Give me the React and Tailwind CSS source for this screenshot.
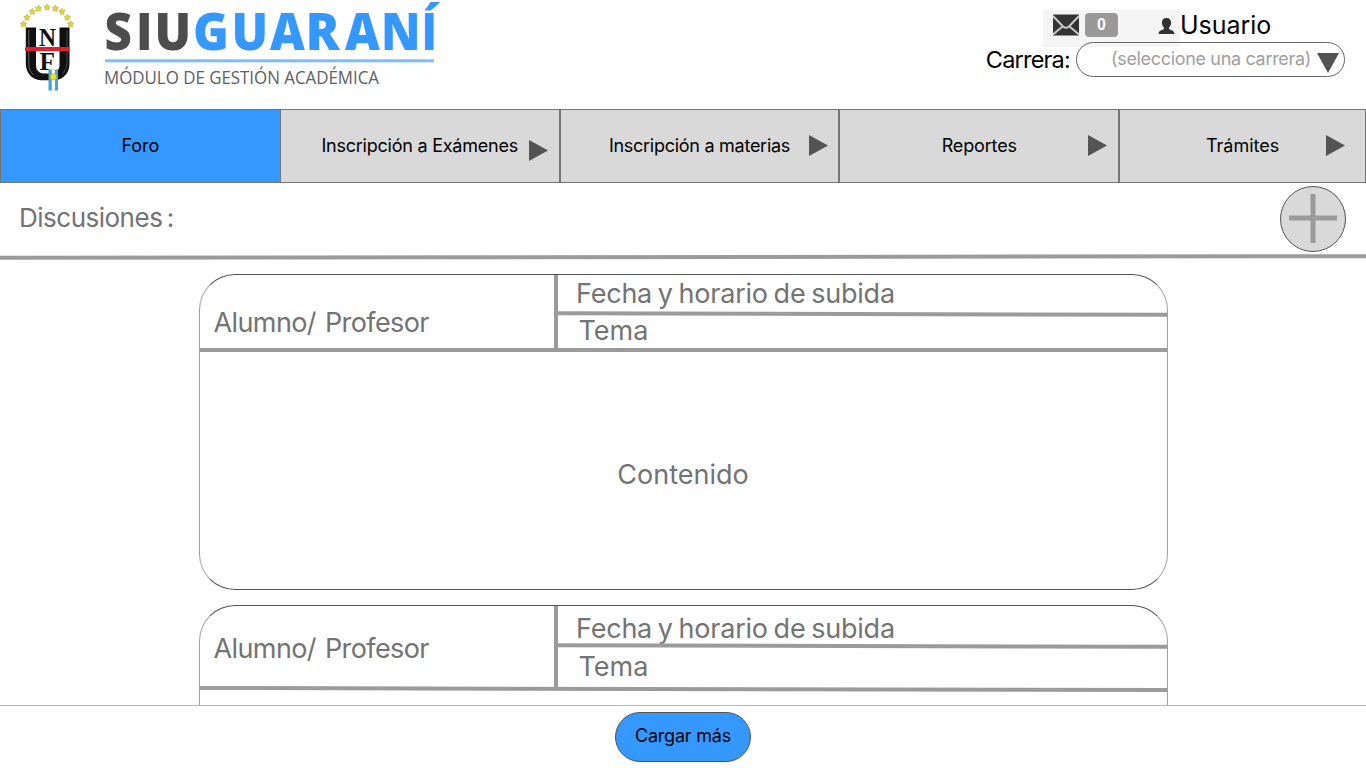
function Crest() {
  const stars = [[23.5, 24], [27, 17.3], [32.3, 11.5], [38.5, 8.3], [47, 7.2], [55.3, 8.3], [62, 11.5], [67.3, 17.3], [70.5, 24]];
  return (
    <svg width="100" height="100" viewBox="0 0 100 100" className="shrink-0">
      {stars.map(([x, y]) => (
        <path
          key={x}
          transform={`translate(${x} ${y})`}
          d="M0-3.200L1.200-1.200 3.200-.9 1.700.9 2 3 0 2.100-2 3-1.700.9-3.200-.9-1.200-1.200Z"
          fill="#e3d832"
          stroke="#a89f3c"
          strokeWidth=".5"
        />
      ))}
      <path d="M25.800 27.500h10.200v38c0 4 2.500 7 6.500 8h9.500c4.500-1 7.500-4 7.500-8v-38h10v36c0 10-6.500 16-14.500 16.800H41C32 79.500 25.800 73 25.800 63.500Z" fill="#101010" />
      <path d="M28.800 30v34c0 5 2 8.500 5 11" fill="none" stroke="#666" strokeWidth="1" />
      <path d="M67 30v32c0 5-2 9-5 12" fill="none" stroke="#555" strokeWidth=".8" />
      <text x="39" y="46" fontFamily="Liberation Serif, serif" fontWeight="bold" fontSize="26" textLength="17" lengthAdjust="spacingAndGlyphs" fill="#111">N</text>
      <text x="39.500" y="70" fontFamily="Liberation Serif, serif" fontWeight="bold" fontSize="26" textLength="15.500" lengthAdjust="spacingAndGlyphs" fill="#111">F</text>
      <rect x="25" y="47" width="44.500" height="4" rx="1" fill="#e0202c" />
      <rect x="48.500" y="69.500" width="9.500" height="21" fill="#45a5d8" />
      <rect x="51.800" y="69.500" width="3.200" height="21" fill="#fff" />
      <circle cx="53.400" cy="76.800" r="3.200" fill="#ece32a" stroke="#a8a12b" strokeWidth=".5" />
    </svg>
  );
}

const WORDMARK = [
  ["S", 104.5, 0.93], ["I", 136, 0.93], ["U", 154.5, 0.95], ["G", 193, 0.95], ["U", 231.5, 0.95],
  ["A", 270, 0.94], ["R", 305.5, 0.99], ["A", 345, 0.94], ["N", 381, 0.93], ["Í", 421.5, 0.86],
];

function Brand() {
  return (
    <svg width="350" height="100" viewBox="95 0 350 100" className="shrink-0 overflow-visible" fontFamily="Open Sans, Noto Sans, sans-serif">
      <g fontSize="51" fontWeight="800">
        {WORDMARK.map(([letter, x, scale], i) => (
          <text key={x} transform={`translate(${x} 50) scale(${scale} 1)`} fill={i < 3 ? "#4d4d4d" : "#3598ff"}>{letter}</text>
        ))}
      </g>
      <rect x="105" y="59.300" width="329" height="3" fill="#7dbcff" />
      <text y="84" x="104" fontSize="18.500" fill="#606060" textLength="275" lengthAdjust="spacingAndGlyphs">MÓDULO DE GESTIÓN ACADÉMICA</text>
    </svg>
  );
}

function Arrow({ className = "" }) {
  return (
    <svg width="19" height="21" viewBox="0 0 19 21" className={className}>
      <path d="M0 0L19 10.500L0 21Z" fill="#545454" />
    </svg>
  );
}

function NavItem({ label, tracking = "", active, width, arrow }) {
  return (
    <div className={`relative flex h-[74px] items-center justify-center border border-[#757575] pb-[2px] text-[18px] text-black ${active ? "bg-[#3598ff]" : "bg-[#d9d9d9]"} ${width}`}>
      <span className={`whitespace-nowrap ${tracking}`}>{label}</span>
      {arrow && <Arrow className={`absolute ${arrow}`} />}
    </div>
  );
}

function Post({ headerHeight, author, date, dateRow, topic, rule, bottomRule, content }) {
  return (
    <article className="flex h-[316px] w-[969px] shrink-0 flex-col overflow-hidden rounded-[36px] border border-x-[#a0a0a0] border-y-[#545454] text-[27px] leading-[34px] text-[#737373]">
      <div className={`flex shrink-0 ${headerHeight}`}>
        <div className={`w-[354px] shrink-0 pl-[14px] tracking-[-0.600px] [word-spacing:2px] ${author}`}>Alumno/ Profesor</div>
        <div className="w-1 shrink-0 bg-[#9b9b9b]" />
        <div className="flex grow flex-col">
          <div className={`shrink-0 pl-[18.500px] tracking-[-0.22px] [word-spacing:-1.600px] ${dateRow} ${date}`}>Fecha y horario de subida</div>
          <div className={`h-1 shrink-0 bg-[#9b9b9b] ${rule}`} />
          <div className={`pl-[21px] ${topic}`}>Tema</div>
        </div>
      </div>
      <div className={`h-1 shrink-0 bg-[#9b9b9b] ${bottomRule}`} />
      <div className="flex grow items-center justify-center pt-2">{content}</div>
    </article>
  );
}

export default function App() {
  return (
    <div className="flex h-[768px] w-[1366px] flex-col overflow-hidden bg-white font-['Inter',sans-serif]">
      <header className="flex h-[109px] shrink-0">
        <div className="flex w-[95px] shrink-0"><Crest /></div>
        <Brand />
        <div className="ml-auto flex w-[400px] flex-col pt-[10px] pr-[21px]">
          <div className="flex h-[32px] pl-[77px]">
            <div className="flex h-[37px] w-[137px] shrink-0 bg-[#f5f5f5] pt-[3px] pl-[9px]">
              <svg width="28" height="23" viewBox="0 0 28 23" className="shrink-0">
                <path d="M1 1.500h26v21H1Z" fill="#333" />
                <path d="M1 3l10 10.500q3 2.500 6 0L27 3M1 21.500l9.500-8M27 21.500l-9.500-8" fill="none" stroke="#c9c9c9" strokeWidth="2" />
              </svg>
              <span className="ml-[5px] flex h-6 w-[33px] items-center justify-center rounded-[4px] bg-[#999] font-['Liberation_Sans',sans-serif] text-[16px] font-bold text-white">0</span>
              <svg width="17" height="18" viewBox="0 0 17 18" className="mt-[4px] ml-[40px] shrink-0">
                <path d="M8.500 1c3 0 4.600 2 4.600 4.600 0 2.200-.8 3.800-2 5v1.600c2.400.8 5.400 1.600 5.400 4.800H.5c0-3.200 3-4 5.400-4.800v-1.600c-1.200-1.200-2-2.800-2-5C3.900 3 5.500 1 8.500 1Z" fill="#333" />
              </svg>
            </div>
            <span className="text-[25px] leading-[30px] tracking-[-0.05px] text-black">Usuario</span>
          </div>
          <div className="flex h-[35px] items-center justify-end">
            <span className="mr-[6px] whitespace-nowrap text-[23.500px] tracking-[-0.800px] text-black">Carrera:</span>
            <div className="flex h-[35px] w-[269px] shrink-0 items-center rounded-full border border-[#666] pl-[34px] text-[18px] text-[#a0a0a0]">
              <span className="w-[201px] pb-[2px] whitespace-nowrap tracking-[-0.330px]">(seleccione una carrera)</span>
              <svg width="22" height="20" viewBox="0 0 22 20" className="mt-[7px] ml-[5px] shrink-0">
                <path d="M0 0H22L11 20Z" fill="#545454" />
              </svg>
            </div>
          </div>
        </div>
      </header>

      <nav className="flex shrink-0">
        <NavItem label="Foro" active width="w-[281px]" />
        <NavItem label="Inscripción a Exámenes" tracking="tracking-[-0.230px]" width="w-[280px] -ml-px" arrow="left-[248px] top-[30px]" />
        <NavItem label="Inscripción a materias" tracking="tracking-[-0.270px]" width="w-[280px]" arrow="left-[248px] top-[25px]" />
        <NavItem label="Reportes" tracking="tracking-[-0.150px]" width="w-[280px]" arrow="left-[248px] top-[25px]" />
        <NavItem label="Trámites" width="w-[247px]" arrow="left-[206px] top-[25px]" />
      </nav>

      <section className="flex h-[72px] shrink-0 items-start justify-between pr-5 pl-[19px]">
        <h1 className="pt-[18px] text-[26px] leading-[34px] tracking-[-0.500px] text-[#737373] [word-spacing:-2.500px]">Discusiones :</h1>
        <button className="mt-[3px] flex h-[66px] w-[66px] items-center justify-center rounded-full border border-[#545454] bg-[#d9d9d9]">
          <svg width="48" height="49" viewBox="0 0 48 49" className="-mt-px">
            <path d="M0 24H48M24 0V49" stroke="#9b9b9b" strokeWidth="5" />
          </svg>
        </button>
      </section>
      <div className="h-1 shrink-0 rotate-[-0.07deg] bg-[#9b9b9b]" />

      <main className="flex min-h-0 grow flex-col items-center gap-[15px] overflow-hidden pt-[15px]">
        <Post headerHeight="h-[73px]" author="pt-[31px]" dateRow="h-[37px]" date="pt-[2px]" topic="-mt-[2px]" rule="rotate-[0.15deg]" bottomRule="" content="Contenido" />
        <Post headerHeight="h-[81px]" author="pt-[26px]" dateRow="h-[38px]" date="pt-[6px]" topic="pt-[2px]" rule="rotate-[0.15deg]" bottomRule="rotate-[0.12deg]" />
      </main>

      <footer className="flex h-[63px] shrink-0 justify-center border-t border-[#b5b5b5] pt-[6px]">
        <button className="h-[50px] w-[136px] rounded-[25px] border border-[#545454] bg-[#3598ff] pb-[3px] text-[18px] tracking-[-0.200px] text-black">Cargar más</button>
      </footer>
    </div>
  );
}
